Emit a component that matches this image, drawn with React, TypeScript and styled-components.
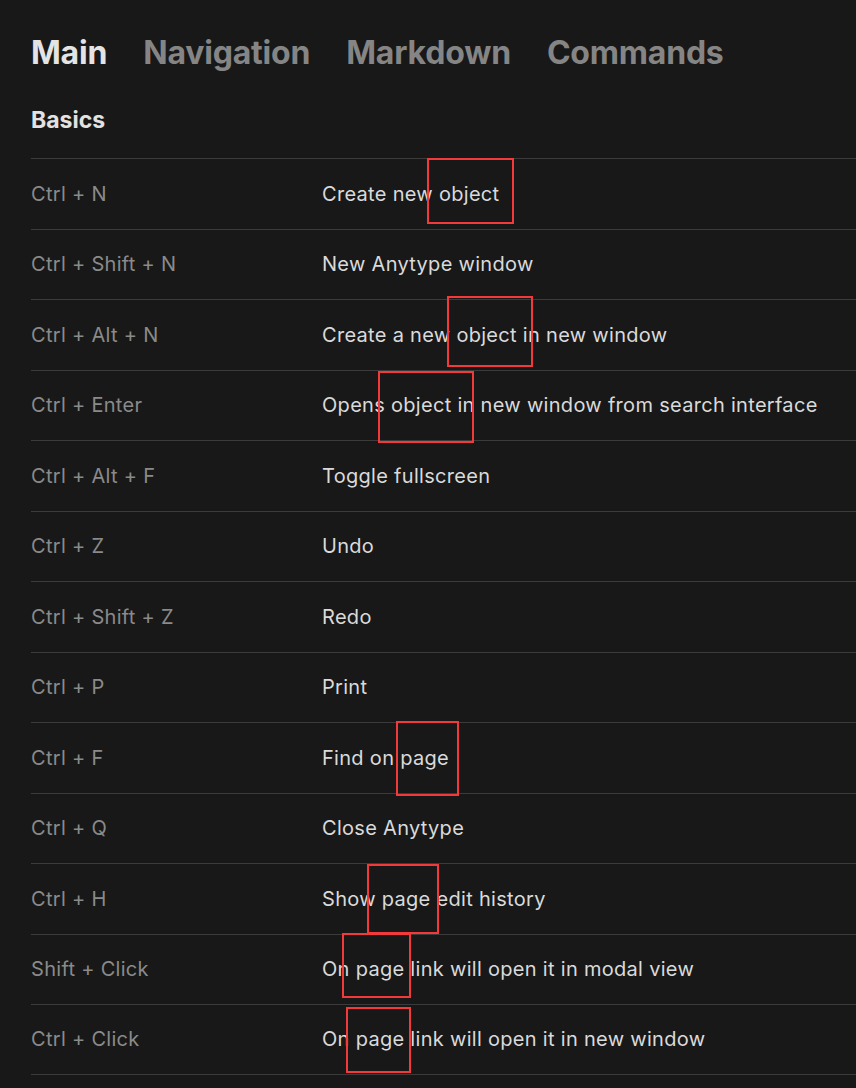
import React from 'react';
import styled, { createGlobalStyle } from 'styled-components';

const GlobalStyle = createGlobalStyle`
  html, body {
    margin: 0;
    padding: 0;
    background: #181818;
  }
  body {
    font-family: Inter, 'Noto Sans', sans-serif;
    -webkit-font-smoothing: antialiased;
  }
`;

// styled components
const Page = styled.div`
  position: relative;
  width: 856px;
  height: 1088px;
  overflow: hidden;
  background: #181818;
  padding: 27px 0 0 31px;
  box-sizing: border-box;
`;

const Tabs = styled.div`
  display: flex;
  align-items: baseline;
  gap: 36px;
  height: 52px;
`;

const Tab = styled.div<{ $active?: boolean }>`
  font-size: 32px;
  font-weight: 700;
  line-height: 52px;
  letter-spacing: -0.2px;
  color: ${(p) => (p.$active ? '#e4e4e4' : '#858585')};
  cursor: pointer;
`;

const SectionTitle = styled.h3`
  margin: 0;
  padding-top: 27px;
  height: 52px;
  font-size: 23px;
  font-weight: 700;
  line-height: 28px;
  color: #e2e2e2;
`;

const List = styled.div`
  display: flex;
  flex-direction: column;
`;

const Row = styled.div`
  display: grid;
  grid-template-columns: 291px 1fr;
  align-items: center;
  height: 70.5px;
  box-sizing: border-box;
  border-top: 1px solid #3b3b3b;
  font-size: 20px;
  letter-spacing: 0.3px;
  white-space: nowrap;
  &:last-child {
    border-bottom: 1px solid #3b3b3b;
  }
`;

const Keys = styled.span`
  color: #8a8a8a;
`;

const Desc = styled.span`
  color: #dadada;
`;

const Highlight = styled.div`
  position: absolute;
  border: 2px solid #f33a3a;
  box-sizing: border-box;
  pointer-events: none;
`;

const tabs = ['Main', 'Navigation', 'Markdown', 'Commands'];

const shortcuts = [
  { keys: 'Ctrl + N', desc: 'Create new object' },
  { keys: 'Ctrl + Shift + N', desc: 'New Anytype window' },
  { keys: 'Ctrl + Alt + N', desc: 'Create a new object in new window' },
  { keys: 'Ctrl + Enter', desc: 'Opens object in new window from search interface' },
  { keys: 'Ctrl + Alt + F', desc: 'Toggle fullscreen' },
  { keys: 'Ctrl + Z', desc: 'Undo' },
  { keys: 'Ctrl + Shift + Z', desc: 'Redo' },
  { keys: 'Ctrl + P', desc: 'Print' },
  { keys: 'Ctrl + F', desc: 'Find on page' },
  { keys: 'Ctrl + Q', desc: 'Close Anytype' },
  { keys: 'Ctrl + H', desc: 'Show page edit history' },
  { keys: 'Shift + Click', desc: 'On page link will open it in modal view' },
  { keys: 'Ctrl + Click', desc: 'On page link will open it in new window' },
];

// annotation boxes drawn over the screenshot
const marks = [
  { x: 427, y: 158, w: 87, h: 66 },
  { x: 447, y: 296, w: 86, h: 71 },
  { x: 378, y: 371, w: 96, h: 72 },
  { x: 396, y: 721, w: 63, h: 75 },
  { x: 367, y: 864, w: 72, h: 70 },
  { x: 342, y: 933, w: 69, h: 65 },
  { x: 346, y: 1007, w: 65, h: 66 },
];

const App = () => {
  return (
    <Page>
      <GlobalStyle />
      <Tabs>
        {tabs.map((t, i) => (
          <Tab key={t} $active={i === 0}>
            {t}
          </Tab>
        ))}
      </Tabs>
      <SectionTitle>Basics</SectionTitle>
      <List>
        {shortcuts.map((s) => (
          <Row key={s.keys}>
            <Keys>{s.keys}</Keys>
            <Desc>{s.desc}</Desc>
          </Row>
        ))}
      </List>
      {marks.map((m, i) => (
        <Highlight key={i} style={{ left: m.x, top: m.y, width: m.w, height: m.h }} />
      ))}
    </Page>
  );
};

export default App;
